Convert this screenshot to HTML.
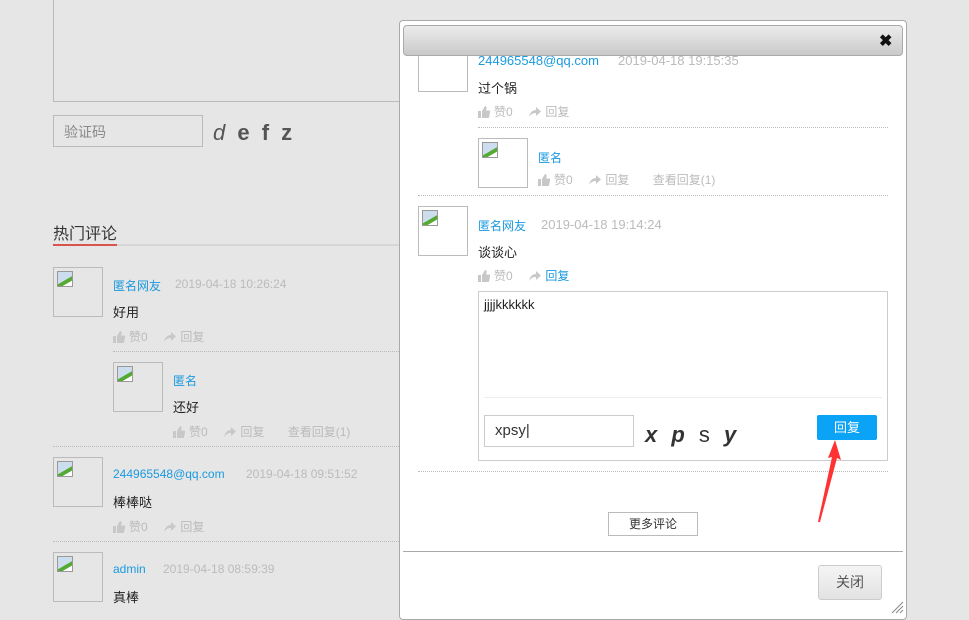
<!DOCTYPE html>
<html><head><meta charset="utf-8"><style>
*{margin:0;padding:0;box-sizing:border-box}
body{width:969px;height:615px;overflow:hidden;background:#e6e6e6;position:relative;font-family:"Liberation Sans","Noto Sans CJK SC",sans-serif;font-size:12px;color:#333}
.a{position:absolute;white-space:nowrap}
.av{position:absolute;width:50px;height:50px;border:1px solid #bbb}
.av i{position:absolute;left:3px;top:3px;width:16px;height:16px;border:1px solid #999;background:linear-gradient(150deg,#cde 0 55%,#5a3 56% 75%,#fff 76%)}
.nm{color:#1a9ae0;font-size:12px}
.dt{color:#bbb;font-size:12px}
.ct{font-size:13px;color:#222}
.ac{color:#bbb;font-size:12px}
.ac svg{vertical-align:-2px;margin-right:4px}
.dot{position:absolute;border-top:1px dotted #bbb;height:0}
</style></head><body>
<svg width="0" height="0" style="position:absolute"><defs>
<symbol id="th" viewBox="0 0 12 12"><path d="M0 5h3v7H0zM4 5l3-5c1 0 2 1 1.5 3L8 4.5h3.5c.5 0 .8.5.7 1L11 11.5c-.1.3-.4.5-.7.5H4z" fill="#c8c8c8"/></symbol>
<symbol id="rp" viewBox="0 0 12 12"><path d="M0 11C1 6 4 4 7 4V1l5 4.5L7 10V7C4 7 2 8 0 11z" fill="#c8c8c8"/></symbol>
</defs></svg>
<!-- background page -->
<div class="a" style="left:53px;top:-2px;width:500px;height:104px;border:1px solid #bbb;border-right:none"></div>
<div class="a" style="left:53px;top:115px;width:150px;height:32px;border:1px solid #bbb;color:#888;font-size:14px;padding:6px 10px">验证码</div>
<div class="a" style="left:213px;top:120px;font-size:22px;color:#555;font-weight:bold;letter-spacing:3px"><span style="font-style:italic;font-weight:normal">d</span> e f z</div>
<div class="a" style="left:53px;top:220px;font-size:16px;color:#333">热门评论</div>
<div class="a" style="left:53px;top:244px;width:350px;height:2px;background:#d6d6d6"></div>
<div class="a" style="left:53px;top:244px;width:64px;height:2px;background:#d9534f"></div>

<div class="av" style="left:53px;top:267px"><i></i></div>
<div class="a nm" style="left:113px;top:277px">匿名网友</div><div class="a dt" style="left:175px;top:277px">2019-04-18 10:26:24</div>
<div class="a ct" style="left:113px;top:302px">好用</div>
<div class="a ac" style="left:113px;top:328px"><svg width="12" height="12"><use href="#th"/></svg>赞0 &nbsp; &nbsp; <svg width="12" height="12"><use href="#rp"/></svg>回复</div>
<div class="dot" style="left:113px;top:351px;width:290px"></div>
<div class="av" style="left:113px;top:362px"><i></i></div>
<div class="a nm" style="left:173px;top:372px">匿名</div>
<div class="a ct" style="left:173px;top:397px">还好</div>
<div class="a ac" style="left:173px;top:423px"><svg width="12" height="12"><use href="#th"/></svg>赞0 &nbsp; &nbsp; <svg width="12" height="12"><use href="#rp"/></svg>回复 &nbsp; &nbsp; &nbsp; 查看回复(1)</div>
<div class="dot" style="left:53px;top:446px;width:350px"></div>
<div class="av" style="left:53px;top:457px"><i></i></div>
<div class="a nm" style="left:113px;top:467px">244965548@qq.com</div><div class="a dt" style="left:246px;top:467px">2019-04-18 09:51:52</div>
<div class="a ct" style="left:113px;top:492px">棒棒哒</div>
<div class="a ac" style="left:113px;top:518px"><svg width="12" height="12"><use href="#th"/></svg>赞0 &nbsp; &nbsp; <svg width="12" height="12"><use href="#rp"/></svg>回复</div>
<div class="dot" style="left:53px;top:541px;width:350px"></div>
<div class="av" style="left:53px;top:552px"><i></i></div>
<div class="a nm" style="left:113px;top:562px">admin</div><div class="a dt" style="left:163px;top:562px">2019-04-18 08:59:39</div>
<div class="a ct" style="left:113px;top:587px">真棒</div>

<!-- dialog -->
<div class="a" style="left:399px;top:20px;width:508px;height:600px;background:#fff;border:1px solid #aaa;border-radius:4px;overflow:hidden">
<div style="position:absolute;left:-400px;top:-21px;width:969px;height:615px">
<div class="av" style="left:418px;top:42px;border-color:#bbb"></div>
<div class="a nm" style="left:478px;top:53px;font-size:13px">244965548@qq.com</div><div class="a dt" style="left:618px;top:53px;font-size:13px">2019-04-18 19:15:35</div>
<div class="a ct" style="left:478px;top:78px">过个锅</div>
<div class="a ac" style="left:478px;top:103px"><svg width="12" height="12"><use href="#th"/></svg>赞0 &nbsp; &nbsp; <svg width="12" height="12"><use href="#rp"/></svg>回复</div>
<div class="dot" style="left:478px;top:127px;width:410px"></div>
<div class="av" style="left:478px;top:138px;border-color:#bbb"><i></i></div>
<div class="a nm" style="left:538px;top:149px">匿名</div>
<div class="a ac" style="left:538px;top:171px"><svg width="12" height="12"><use href="#th"/></svg>赞0 &nbsp; &nbsp; <svg width="12" height="12"><use href="#rp"/></svg>回复 &nbsp; &nbsp; &nbsp; 查看回复(1)</div>
<div class="dot" style="left:418px;top:195px;width:470px"></div>
<div class="av" style="left:418px;top:206px;border-color:#bbb"><i></i></div>
<div class="a nm" style="left:478px;top:217px">匿名网友</div><div class="a dt" style="left:541px;top:217px;font-size:13px">2019-04-18 19:14:24</div>
<div class="a ct" style="left:478px;top:242px">谈谈心</div>
<div class="a ac" style="left:478px;top:267px"><svg width="12" height="12"><use href="#th"/></svg>赞0 &nbsp; &nbsp; <svg width="12" height="12"><use href="#rp"/></svg><span style="color:#1a9ae0">回复</span></div>
<div class="a" style="left:478px;top:291px;width:410px;height:170px;border:1px solid #ccc"></div>
<div class="a ct" style="left:484px;top:297px">jjjjkkkkkk</div>
<div class="a" style="left:484px;top:397px;width:398px;height:1px;background:#eee"></div>
<div class="a" style="left:484px;top:415px;width:150px;height:32px;border:1px solid #ccc;font-size:15px;padding:6px 10px;color:#333">xpsy|</div>
<div class="a" style="left:645px;top:422px;font-size:22px;color:#333;font-weight:bold;font-style:italic;letter-spacing:4px">x p <span style="font-weight:normal;font-style:normal">s</span> y</div>
<div class="a" style="left:817px;top:415px;width:60px;height:25px;background:#0aa3f5;border-radius:2px;color:#fff;font-size:13px;text-align:center;line-height:25px">回复</div>
<div class="dot" style="left:418px;top:471px;width:470px"></div>
<div class="a" style="left:608px;top:512px;width:90px;height:24px;border:1px solid #bbb;text-align:center;line-height:22px;color:#333">更多评论</div>
<div class="a" style="left:403px;top:551px;width:500px;height:1px;background:#aaa"></div>
<div class="a" style="left:818px;top:565px;width:64px;height:35px;border:1px solid #ccc;border-radius:3px;background:linear-gradient(#f5f5f5,#e2e2e2);text-align:center;line-height:33px;font-size:14px;color:#555">关闭</div>
</div>
</div>
<div class="a" style="left:403px;top:25px;width:500px;height:31px;border:1px solid #aaa;border-radius:4px;background:linear-gradient(#ececec,#c9c9c9)"></div>
<div class="a" style="left:879px;top:31px;font-size:16px;font-weight:bold;color:#111">✖</div>
<svg class="a" style="left:810px;top:436px" width="40" height="90"><polygon points="25,4 18,22 22,21 8,86 10,86 27,22 31,24" fill="#f33"/></svg>
<svg class="a" style="left:890px;top:600px" width="14" height="14"><path d="M2 13L13 2M6 13L13 6M10 13L13 10" stroke="#888"/></svg>
</body></html>
